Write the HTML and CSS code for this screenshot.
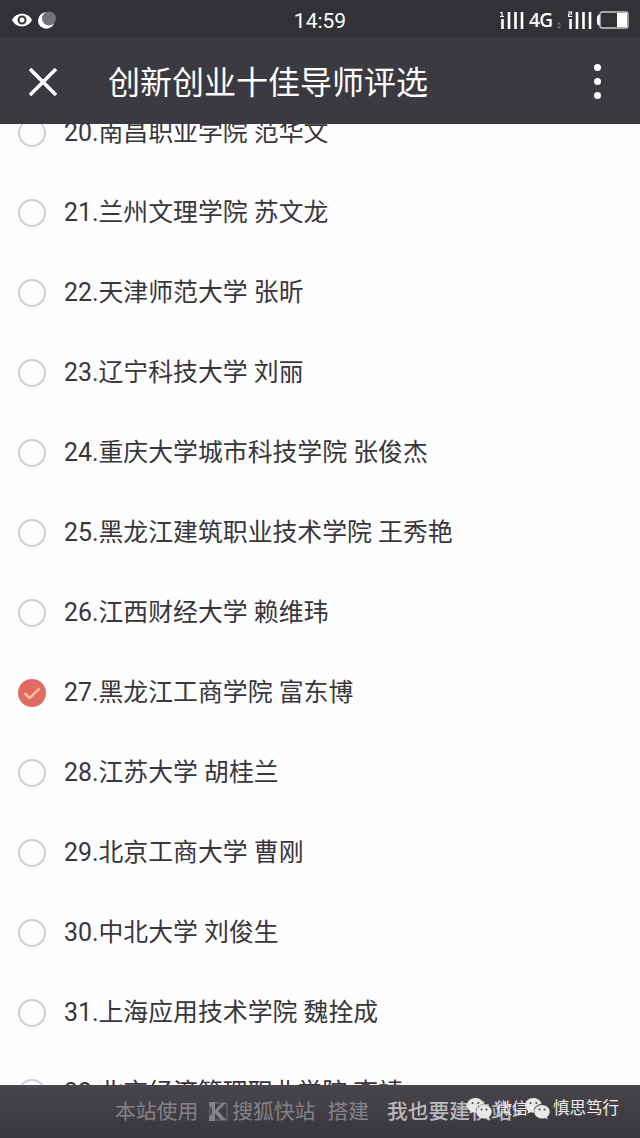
FILE: index.html
```html
<!DOCTYPE html>
<html lang="zh-CN">
<head>
    <meta charset="UTF-8">
    <meta name="viewport" content="width=device-width, initial-scale=1.0">
    <title>创新创业十佳导师评选</title>
    <link rel="stylesheet" href="styles.css">
</head>
<body>
    <div class="status-bar">
        <div class="status-left">
            <svg width="20" height="14" viewBox="0 0 20 14">
                <path d="M0 7C4-1.500 16-1.500 20 7C16 15.500 4 15.500 0 7Z" fill="#fff"/>
                <circle cx="10" cy="7" r="3.500" fill="#fff" stroke="#333237" stroke-width="2"/>
            </svg>
            <svg class="moon" width="18" height="18" viewBox="0 0 18 18">
                <circle cx="8.300" cy="9.500" r="8.300" fill="#fff"/>
                <circle cx="11" cy="7.500" r="7" fill="#727276"/>
            </svg>
        </div>
        <div class="time">14:59</div>
        <div class="status-right">
            <svg class="signal" width="24" height="18" viewBox="0 0 24 18">
                <path d="M0 1.500H2V5.500M0 5.500H4" fill="none" stroke="#fff" stroke-width="1.200"/>
                <path d="M2.500 8V18M9 1V18M15.500 1V18M22 1V18" stroke="#fff" stroke-width="2.600"/>
            </svg>
            <span class="network">4G</span>
            <svg class="data" width="4" height="7" viewBox="0 0 4 7">
                <path d="M0 2.500L2 0L4 2.500ZM0 4.500L2 7L4 4.500Z" fill="#77767a"/>
            </svg>
            <svg class="signal" width="24" height="18" viewBox="0 0 24 18">
                <path d="M0 1H3.500V3H.6V5.500H4.200" fill="none" stroke="#fff" stroke-width="1.200"/>
                <path d="M2.500 8V18M9 1V18M15.500 1V18M22 1V18" stroke="#fff" stroke-width="2.600"/>
            </svg>
            <svg class="battery" width="32" height="18" viewBox="0 0 32 18">
                <path d="M3 3.500H1.500Q0 5 0 7V11Q0 13 1.500 14.500H3Z" fill="#fff"/>
                <rect x="3" y="1" width="28" height="16" rx="2" fill="none" stroke="#ccc" stroke-width="1.300"/>
                <path d="M20 2H30V16H20Z" fill="#fff"/>
            </svg>
        </div>
    </div>

    <header>
        <svg class="close" width="28" height="28" viewBox="0 0 28 28">
            <path d="M1 1L27 27M27 1L1 27" stroke="#fff" stroke-width="3.600"/>
        </svg>
        <h1>创新创业十佳导师评选</h1>
        <div class="menu"><i></i><i></i><i></i></div>
    </header>

    <main>
        <ul class="options">
            <li><span class="radio"></span><span class="label">20.南昌职业学院 范华文</span></li>
            <li><span class="radio"></span><span class="label">21.兰州文理学院 苏文龙</span></li>
            <li><span class="radio"></span><span class="label">22.天津师范大学 张昕</span></li>
            <li><span class="radio"></span><span class="label">23.辽宁科技大学 刘丽</span></li>
            <li><span class="radio"></span><span class="label">24.重庆大学城市科技学院 张俊杰</span></li>
            <li><span class="radio"></span><span class="label">25.黑龙江建筑职业技术学院 王秀艳</span></li>
            <li><span class="radio"></span><span class="label">26.江西财经大学 赖维玮</span></li>
            <li>
                <span class="radio checked">
                    <svg width="28" height="28" viewBox="0 0 28 28">
                        <path d="M6.500 14L11.500 19L21.500 9.500" fill="none" stroke="#ffc9a4" stroke-width="2.400"/>
                    </svg>
                </span>
                <span class="label">27.黑龙江工商学院 富东博</span>
            </li>
            <li><span class="radio"></span><span class="label">28.江苏大学 胡桂兰</span></li>
            <li><span class="radio"></span><span class="label">29.北京工商大学 曹刚</span></li>
            <li><span class="radio"></span><span class="label">30.中北大学 刘俊生</span></li>
            <li><span class="radio"></span><span class="label">31.上海应用技术学院 魏拴成</span></li>
            <li><span class="radio"></span><span class="label">32.北京经济管理职业学院 李靖</span></li>
        </ul>
    </main>

    <footer>
        <span>本站使用</span>
        <svg class="logo" width="19" height="19" viewBox="0 0 19 19">
            <path d="M1 1H18V18H1Z" fill="none" stroke="#777579" stroke-width="1"/>
            <path d="M0 0H6V8L13 1H17L9 9L17 18H12L6 11V19H0V15L3 12V6L0 3Z" fill="#858387"/>
        </svg>
        <span>搜狐快站</span>
        <span class="build">搭建</span>
        <a class="join">我也要建快站&gt;</a>
        <!-- account label over the footer -->
        <div class="watermark">
            <svg class="wechat" width="25" height="22" viewBox="0 0 25 22">
                <path d="M8.500 0C3.800 0 0 3.200 0 7.300C0 9.700 1.300 11.700 3.200 13L2.300 15.800L5.600 14.200Q7 14.700 9 14.600C8 9.500 12 6 16.500 6C15.700 2.500 12.500 0 8.500 0Z" fill="#e8e8e8"/>
                <path d="M17 7C12.500 7 9.300 10 9.300 13.700C9.300 17.500 12.600 20.400 17 20.400Q18.700 20.400 20 19.900L22.700 21.500L22 18.900C23.700 17.700 24.700 15.900 24.700 13.700C24.700 10 21.400 7 17 7Z" fill="#e8e8e8"/>
                <path d="M5.500 4.900h.01M11.300 4.900h.01M14.500 11.500h.01M19.500 11.500h.01" stroke="#464449" stroke-width="2" stroke-linecap="round"/>
            </svg>
            <span class="wx">微信</span>
            <svg class="wechat" width="25" height="22" viewBox="0 0 25 22">
                <path d="M8.500 0C3.800 0 0 3.200 0 7.300C0 9.700 1.300 11.700 3.200 13L2.300 15.800L5.600 14.200Q7 14.700 9 14.600C8 9.500 12 6 16.500 6C15.700 2.500 12.500 0 8.500 0Z" fill="#e8e8e8"/>
                <path d="M17 7C12.500 7 9.300 10 9.300 13.700C9.300 17.500 12.600 20.400 17 20.400Q18.700 20.400 20 19.900L22.700 21.500L22 18.900C23.700 17.700 24.700 15.900 24.700 13.700C24.700 10 21.400 7 17 7Z" fill="#e8e8e8"/>
                <path d="M5.500 4.900h.01M11.300 4.900h.01M14.500 11.500h.01M19.500 11.500h.01" stroke="#464449" stroke-width="2" stroke-linecap="round"/>
            </svg>
            <span class="name">慎思笃行</span>
        </div>
    </footer>
</body>
</html>
```
FILE: styles.css
```css
* {
    box-sizing: border-box;
}
body {
    margin: 0;
    height: 1138px;
    display: flex;
    flex-direction: column;
    overflow: hidden;
    background-color: #fefdfe;
    color: #38363b;
    font-family: Roboto, "Noto Sans CJK SC", sans-serif;
}
svg {
    display: block;
    flex: none;
}
.status-bar {
    flex: none;
    height: 38px;
    padding: 0 11px 0 12px;
    display: grid;
    grid-template-columns: 1fr auto 1fr;
    align-items: center;
    background-color: #323136;
    color: #fff;
}
.status-left, .status-right {
    display: flex;
    align-items: center;
}
.status-left {
    gap: 6px;
}
.status-right {
    justify-content: flex-end;
}
.time {
    font-size: 21px;
    line-height: 38px;
    padding: 2px 1px 0 0;
}
.network {
    font-family: "Open Sans", sans-serif;
    font-size: 19px;
    font-weight: 600;
    line-height: 24px;
    width: 25px;
    margin-left: 5px;
    letter-spacing: -.5px;
}
.data {
    margin: 10px 7px 0 3px;
}
.battery {
    margin-left: 5px;
}
header {
    flex: none;
    height: 86px;
    padding: 0 39px 0 29px;
    display: flex;
    align-items: center;
    background-color: #3b3a40;
    color: #fff;
}
.close {
    margin-top: 2px;
}
h1 {
    flex: 1;
    margin: 4px 0 0 51px;
    font-size: 32px;
    font-weight: 400;
    line-height: 48px;
}
.menu {
    display: flex;
    flex-direction: column;
    gap: 7px;
    margin-top: 1px;
}
.menu i {
    width: 7px;
    height: 7px;
    border-radius: 50%;
    background-color: #fff;
}
main {
    flex: 1;
    min-height: 0;
    overflow: hidden;
}
.options {
    list-style: none;
    margin: -31px 0 0;
    padding: 0 18px;
}
.options li {
    height: 80px;
    display: flex;
    align-items: center;
    font-size: 24.87px;
    line-height: 36px;
    white-space: nowrap;
}
.label {
    margin-bottom: 1px;
}
.radio {
    flex: none;
    width: 28px;
    height: 28px;
    margin-right: 18px;
    border: 2px solid #d3ccd6;
    border-radius: 50%;
}
.radio.checked {
    border: none;
    background-color: #df6b61;
}
footer {
    flex: none;
    position: relative;
    height: 53px;
    padding-left: 115px;
    display: flex;
    align-items: center;
    background: linear-gradient(#48464b, #39373c);
    color: #858387;
    font-size: 20.8px;
    line-height: 30px;
    white-space: nowrap;
}
.logo {
    margin: 0 4px 0 11px;
}
.build {
    margin-left: 12px;
}
.join {
    margin-left: 18px;
    color: #bbb9bd;
    font-weight: 500;
}
.watermark {
    position: absolute;
    left: 467px;
    top: 12px;
    display: flex;
    align-items: center;
    color: #eee;
    font-size: 16.5px;
    line-height: 24px;
}
.wx {
    width: 29px;
    margin-left: 4px;
    font-size: 16px;
}
.name {
    margin-left: 3px;
}
```
